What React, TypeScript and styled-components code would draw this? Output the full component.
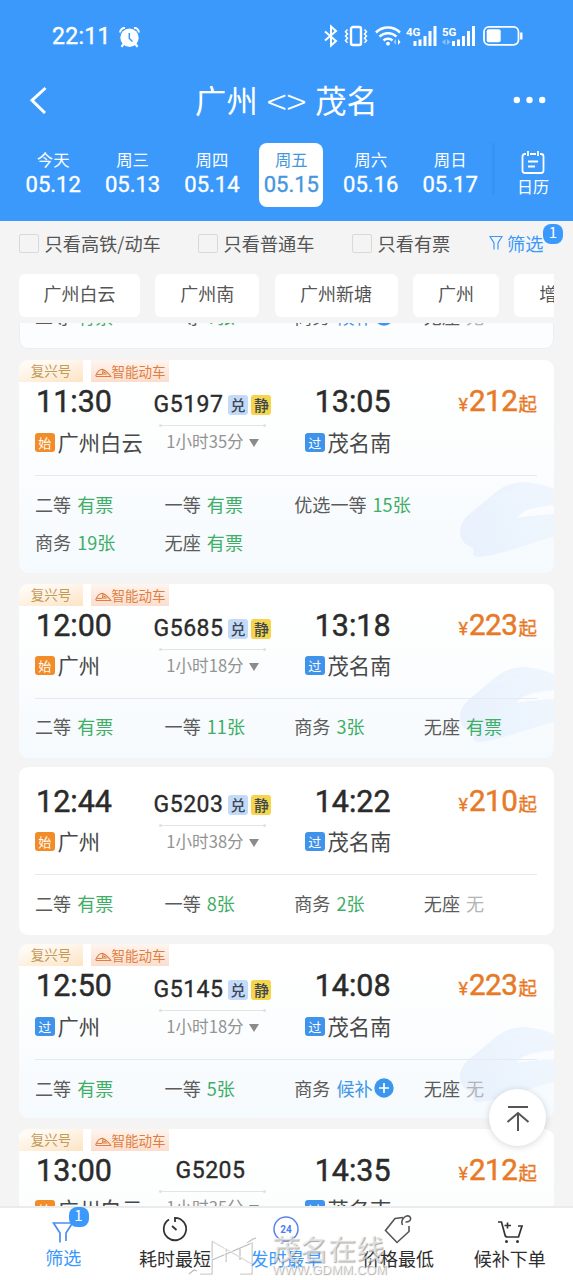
import React from 'react';
import styled, { createGlobalStyle } from 'styled-components';

const BLUE = '#3b99fc';
const GREEN = '#3fae66';
const ORANGE = '#e87a27';
const NUM = `Roboto, "Noto Sans CJK SC", sans-serif`;

const GlobalStyle = createGlobalStyle`
  * { box-sizing: border-box; }
  body { margin: 0; font-family: "Noto Sans CJK SC", sans-serif; background: #f4f4f4; }
`;

const Screen = styled.div`
  position: relative;
  width: 573px;
  height: 1280px;
  display: flex;
  flex-direction: column;
  overflow: hidden;
  background: #f4f4f4;
  white-space: nowrap;
`;

const Header = styled.header`
  flex: none;
  height: 221px;
  background: ${BLUE};
  color: #fff;
  display: flex;
  flex-direction: column;
`;

const StatusBar = styled.div`
  height: 72px;
  padding: 0 50px 0 52px;
  display: flex;
  align-items: center;
  justify-content: space-between;
`;

const StatusClock = styled.div`
  display: flex;
  align-items: center;
  gap: 8px;
  padding-top: 2px;
  font: 450 23px/30px ${NUM};
  letter-spacing: 0.3px;
  -webkit-text-stroke: 0.4px;
`;

const TitleRow = styled.div`
  height: 56px;
  padding: 0 28px;
  display: grid;
  grid-template-columns: 36px 1fr 36px;
  align-items: center;
`;

const Title = styled.h1`
  margin: 0;
  display: flex;
  justify-content: center;
  gap: 9px;
  font-size: 31.3px;
  line-height: 40px;
  font-weight: 400;
`;

const Arrows = styled.span`
  font-size: 37px;
  font-weight: 300;
`;

const Dots = styled.svg`
  overflow: visible;
`;

const DateRow = styled.div`
  margin-top: 15px;
  height: 64px;
  padding-left: 21.2px;
  display: flex;
  gap: 15.4px;
`;

const DateTab = styled.div<{ $active?: boolean }>`
  width: 64px;
  height: 64px;
  flex: none;
  border-radius: 8px;
  display: flex;
  flex-direction: column;
  align-items: center;
  padding-top: 5px;
  background: ${p => (p.$active ? '#fff' : 'transparent')};
  color: ${p => (p.$active ? '#4596dd' : '#fff')};
`;

const Weekday = styled.span`
  font-size: 16.4px;
  line-height: 22px;
`;

const DayNumber = styled.span`
  margin-top: 1px;
  font: 450 22px/28px ${NUM};
  -webkit-text-stroke: 0.35px;
`;

const Calendar = styled.div`
  width: 80px;
  display: flex;
  flex-direction: column;
  align-items: center;
  padding-top: 7px;
  border-left: 3px solid rgba(30, 120, 225, 0.16);
  margin-left: -6px;
  height: 52px;
  svg { flex: none; }
`;

const CalendarLabel = styled.span`
  font-size: 16px;
  line-height: 22px;
`;

const Filters = styled.div`
  flex: none;
  height: 53px;
  padding: 0 0 9px 19px;
  display: flex;
  align-items: center;
  font-size: 18.2px;
  color: #555;
`;

const Check = styled.label<{ $w: number }>`
  width: ${p => p.$w}px;
  display: flex;
  align-items: center;
  gap: 6px;
  line-height: 25px;
`;

const Box = styled.i`
  width: 19.5px;
  height: 19.5px;
  border: 1.5px solid #d9d9d9;
  border-radius: 2px;
  margin-top: 1px;
`;

const FilterButton = styled.div`
  position: relative;
  display: flex;
  align-items: center;
  gap: 4px;
  line-height: 26px;
  color: ${BLUE};
`;

const Badge = styled.span<{ $x: number; $y: number }>`
  position: absolute;
  left: ${p => p.$x}px;
  top: ${p => p.$y}px;
  width: 20px;
  height: 19.5px;
  border-radius: 8px;
  background: ${BLUE};
  color: #fff;
  text-align: center;
  font: 400 15px/16px "Noto Sans CJK SC", sans-serif;
`;

const Chips = styled.div`
  flex: none;
  margin: 0 19px;
  height: 49px;
  display: flex;
  gap: 15.3px;
  overflow: hidden;
`;

const Chip = styled.div<{ $w: number }>`
  flex: none;
  width: ${p => p.$w}px;
  height: 43px;
  border-radius: 6px;
  background: #fff;
  color: #555;
  text-align: center;
  font-size: 18px;
  line-height: 39px;
`;

const List = styled.main`
  flex: 1;
  min-height: 0;
  padding: 0 19px;
  overflow: hidden;
`;

const Card = styled.section<{ $h: number; $mt: number; $tinted: boolean }>`
  position: relative;
  height: ${p => p.$h}px;
  margin-top: ${p => p.$mt}px;
  border-radius: 9px;
  overflow: hidden;
  background: ${p => (p.$tinted ? 'linear-gradient(180deg, #fff 0%, #fdfefe 35%, #f5fafe 100%)' : '#fff')};
`;

const ClippedCard = styled.section`
  height: 26px;
  border-radius: 0 0 9px 9px;
  overflow: hidden;
  background: #fcfdff;
  border: 1px solid #eceef2;
  border-top: 0;
`;

const ClippedSeats = styled.div`
  margin: -20px 0 0 -1px;
`;

const Tags = styled.div`
  height: 22px;
  display: flex;
  gap: 8px;
  font-size: 13.5px;
  line-height: 20px;
`;

const SeriesTag = styled.span`
  width: 64px;
  text-align: center;
  color: #c29a5a;
  background: linear-gradient(165deg, #fffaf4 20%, #fde4c4);
`;

const SmartTag = styled.span`
  width: 78px;
  display: flex;
  align-items: center;
  justify-content: center;
  gap: 0;
  color: #dd7f43;
  background: linear-gradient(180deg, #fef5f0, #fcddcc);
  svg { margin-top: 4px; }
`;

const Trip = styled.div<{ $h: number; $pad: number }>`
  position: relative;
  height: ${p => p.$h}px;
  padding-top: ${p => p.$pad}px;
  margin: 0 17px 0 16px;
  border-bottom: 1px solid #e6eaee;
  display: grid;
  grid-template-columns: 115px 125px 121px 1fr;
`;

const Stop = styled.div<{ $pl?: number }>`
  padding-left: ${p => p.$pl ?? 0}px;
`;

const Time = styled.div<{ $indent: number }>`
  padding-left: ${p => p.$indent}px;
  font: 450 30.5px/31px ${NUM};
  -webkit-text-stroke: 0.45px;
  color: #2b2b2b;
`;

const Station = styled.div<{ $gap: number }>`
  margin-top: ${p => p.$gap}px;
  height: 23px;
  display: flex;
  align-items: center;
  gap: 3px;
  font-size: 21.3px;
  line-height: 23px;
  color: #484848;
`;

const StationName = styled.span`
  margin-top: -2px;
`;

const Mark = styled.i<{ $bg: string }>`
  width: 19.5px;
  height: 19.5px;
  border-radius: 3px;
  background: ${p => p.$bg};
  color: #fff;
  text-align: center;
  font-style: normal;
  font-size: 13px;
  line-height: 19px;
`;

const Middle = styled.div<{ $pt: number }>`
  padding-top: ${p => p.$pt}px;
  display: flex;
  flex-direction: column;
  align-items: center;
`;

const TrainNo = styled.div<{ $plain: boolean }>`
  display: flex;
  align-items: center;
  gap: 3.5px;
  height: 26px;
  margin-right: ${p => (p.$plain ? 4 : 0)}px;
  font: 450 23px/26px ${NUM};
  letter-spacing: 0.5px;
  -webkit-text-stroke: 0.35px;
  color: #2b2b2b;
`;

const Feature = styled.i<{ $bg: string; $first?: boolean }>`
  width: 20px;
  height: 20px;
  margin-left: ${p => (p.$first ? 1 : 0)}px;
  border-radius: 3px;
  background: ${p => p.$bg};
  color: #3f4654;
  text-align: center;
  letter-spacing: 0;
  -webkit-text-stroke: 0;
  font: 500 15px/19px "Noto Sans CJK SC", sans-serif;
`;

const Track = styled.div`
  width: 107px;
  height: 3px;
  margin-top: 6px;
  display: flex;
  align-items: center;
  justify-content: space-between;
  background: linear-gradient(#e2e4e6, #e2e4e6) center / 100% 1px no-repeat;
  &::before, &::after {
    content: '';
    width: 3px;
    height: 3px;
    border-radius: 50%;
    background: #dfe2e5;
  }
`;

const Duration = styled.div`
  display: flex;
  align-items: center;
  gap: 5px;
  margin-top: 2px;
  font-size: 16.6px;
  line-height: 24px;
  color: #939393;
`;

const Caret = styled.i`
  margin-top: 3px;
  border: 5.8px solid transparent;
  border-top: 8px solid #8b8b8b;
  border-bottom: 0;
`;

const Price = styled.div`
  text-align: right;
  font: 450 18px/31px ${NUM};
  -webkit-text-stroke: 0.3px;
  color: ${ORANGE};
`;

const Amount = styled.span`
  font-size: 29.5px;
  letter-spacing: -0.4px;
  margin: 0 1px;
  -webkit-text-stroke: 0.5px;
`;

const PriceFrom = styled.span`
  font: 400 18.5px/30px "Noto Sans CJK SC", sans-serif;
`;

const Seats = styled.div<{ $pt: number }>`
  position: relative;
  padding: ${p => p.$pt}px 0 0 16px;
  display: grid;
  grid-template-columns: repeat(4, 129.6px);
  row-gap: 12.4px;
  font-size: 18.1px;
  line-height: 26px;
  color: #5b5b5b;
`;

const Seat = styled.div<{ $wide: boolean }>`
  display: flex;
  align-items: center;
  gap: 6px;
  grid-column: span ${p => (p.$wide ? 2 : 1)};
`;

const SeatState = styled.span<{ $color: string }>`
  display: flex;
  align-items: center;
  gap: 1px;
  color: ${p => p.$color};
`;

const TrainArt = styled.svg`
  position: absolute;
  right: 0;
  bottom: 15px;
`;

const TopButton = styled.button`
  position: absolute;
  left: 489px;
  top: 1089px;
  width: 57px;
  height: 57px;
  padding: 0;
  border: 0;
  border-radius: 50%;
  background: #fff;
  box-shadow: 0 1px 7px rgba(0, 0, 0, 0.16);
  display: flex;
  align-items: center;
  justify-content: center;
`;

const TabBar = styled.nav`
  flex: none;
  height: 74px;
  padding: 0 7.5px;
  border-top: 2px solid #ebebeb;
  background: #fff;
  display: flex;
`;

const Tab = styled.div<{ $blue?: boolean; $lift?: boolean }>`
  position: relative;
  flex: 1;
  display: flex;
  flex-direction: column;
  align-items: center;
  padding-top: 7px;
  font-size: 18px;
  line-height: 26px;
  color: ${p => (p.$blue ? BLUE : '#2d2d2d')};
  svg { height: 30px; flex: none; margin-bottom: ${p => (p.$lift ? -1.5 : 0)}px; }
`;

const Watermark = styled.div`
  position: absolute;
  left: 186px;
  top: 1234px;
  display: flex;
  gap: 4px;
  pointer-events: none;
  color: rgba(255, 255, 255, 0.6);
  text-shadow: 1px 1px 1px rgba(110, 110, 110, 0.6);
`;

const WatermarkText = styled.div`
  display: flex;
  flex-direction: column;
  padding-left: 12px;
`;

const WatermarkName = styled.span`
  font-weight: 500;
  font-size: 28px;
  line-height: 29px;
`;

const WatermarkUrl = styled.span`
  font: 400 13px/14px "Liberation Sans", sans-serif;
`;

function StatusIcons() {
  return (
    <svg width="200" height="24" viewBox="0 0 200 24" fill="none" stroke="#fff" strokeWidth="2">
      <path d="M2 7.5 13 17 8 21.5V2.5L13 7 2 16.5" />
      <rect x="28" y="3" width="10" height="18" rx="2" strokeWidth="2.4" />
      <path d="M24.5 5.5l-2 2.2 2 2.2-2 2.2 2 2.2-2 2.2 2 2.2M41.500 5.500l2 2.200-2 2.200 2 2.200-2 2.200 2 2.200-2 2.200" strokeWidth="1.5" />
      <path d="M53 8.500a17 17 0 0 1 24 0M56.500 12.700a12 12 0 0 1 17 0M60.500 16.500a6.500 6.500 0 0 1 9 0" strokeWidth="2.500" />
      <circle cx="65" cy="19.700" r="1.900" fill="#fff" stroke="none" />
      <path d="M75 15v6l2.500-3z" fill="#fff" stroke="none" />
      <path d="M73 15v6l-2.500-3z" fill="#9ccdff" stroke="none" />
      <g fill="#fff" stroke="none">
        <path d="M90.500 17h3v5h-3zM95.500 15.500h3V22h-3zM100.500 12h3v10h-3zM105.500 7h3v15h-3zM110.500 2h3v20h-3z" />
        <path d="M129 17h3v5h-3zM134 15.500h3V22h-3zM139 12h3v10h-3zM144 7h3v15h-3zM149 2h3v20h-3z" />
        <path d="M122.500 15v6l-3.500-3zM124 15v6l3.500-3z" fill="#8cc3fd" />
        <text x="83" y="11.500" fontFamily="Roboto" fontWeight="700" fontSize="11.500">4G</text>
        <text x="119" y="11.500" fontFamily="Roboto" fontWeight="700" fontSize="11.500">5G</text>
      </g>
      <rect x="161" y="2.800" width="34.500" height="18" rx="5" strokeWidth="1.800" />
      <rect x="163.700" y="5.300" width="14" height="13" rx="2" fill="#fff" stroke="none" />
      <path d="M198.300 8.500v7" strokeWidth="2.400" />
    </svg>
  );
}

function AlarmIcon() {
  return (
    <svg width="21" height="21" viewBox="0 0 21 21">
      <circle cx="10.500" cy="10.800" r="9.200" fill="#fff" />
      <path d="M1.200 5.500A4 4 0 0 1 6 1.200M19.800 5.500A4 4 0 0 0 15 1.200" stroke="#fff" strokeWidth="2" fill="none" />
      <path d="M4.500 17 2.500 19.800M16.500 17l2 2.800" stroke="#fff" strokeWidth="2.200" />
      <path d="M10.300 6v5.500l3.200 3" stroke={BLUE} strokeWidth="1.500" fill="none" />
    </svg>
  );
}

function TrainIcon() {
  return (
    <svg width="17" height="10" viewBox="0 0 17 10" fill="none" stroke="#dd7f43" strokeWidth="1.100">
      <path d="M1 7C2 4.500 4.500 1.500 7.500 1.200 10.500 2.500 13.500 5 15.800 8.500H1.500Q.5 8 1 7zM2 6c2 .8 4 .6 5.500 0L8 1.500M7.500 6h5" />
      <path d="M8.500 3.300v2h3.500z" fill="#dd7f43" stroke="none" />
    </svg>
  );
}

function Waitlist() {
  return (
    <svg width="20" height="20" viewBox="0 0 20 20">
      <circle cx="10" cy="10" r="9.700" fill="#3b96ee" />
      <path d="M10 5v10M5 10h10" stroke="#fff" strokeWidth="1.700" />
    </svg>
  );
}

function TrainPicture() {
  return (
    <TrainArt width="94" height="78" viewBox="0 0 94 78">
      <defs>
        <linearGradient id="hull" x1="0" x2="1">
          <stop offset="0" stopColor="#e2edfc" />
          <stop offset="1" stopColor="#eaf3fd" />
        </linearGradient>
      </defs>
      <path d="M0 52C0 44 4 38 12 32L36 12C50 0 70-1 94 9V57C68 63 43 75 19 77 10 76 15 71 13 68 5 65 0 60 0 52z" fill="url(#hull)" opacity=".7" />
      <path d="M57 38C62 30 73 27 94 25V34C77 35 68 36 57 38z" fill="#fafcff" />
      <path d="M30 20C46 10 70 16 94 19" stroke="#f0f6fe" strokeWidth="1" fill="none" />
    </TrainArt>
  );
}

type SeatInfo = [string, string];
type TrainInfo = {
  no: string; dep: string; arr: string; from: string; start: boolean; duration: string; price: string;
  seats: SeatInfo[]; smart: boolean; perks: boolean;
  height: number; gap: number; top: number; stationGap: number; trainPad: number; seatPad: number;
};

const trains: TrainInfo[] = [
  { no: 'G5197', dep: '11:30', arr: '13:05', from: '广州白云', start: true, duration: '1小时35分', price: '212',
    seats: [['二等', '有票'], ['一等', '有票'], ['优选一等', '15张'], ['商务', '19张'], ['无座', '有票']],
    smart: true, perks: true, height: 213, gap: 11, top: 94, stationGap: 14, trainPad: 10, seatPad: 14.6 },
  { no: 'G5685', dep: '12:00', arr: '13:18', from: '广州', start: true, duration: '1小时18分', price: '223',
    seats: [['二等', '有票'], ['一等', '11张'], ['商务', '3张'], ['无座', '有票']],
    smart: true, perks: true, height: 173.5, gap: 11, top: 93, stationGap: 13, trainPad: 10, seatPad: 14 },
  { no: 'G5203', dep: '12:44', arr: '14:22', from: '广州', start: true, duration: '1小时38分', price: '210',
    seats: [['二等', '有票'], ['一等', '8张'], ['商务', '2张'], ['无座', '无']],
    smart: false, perks: true, height: 167.5, gap: 9.5, top: 108, stationGap: 13, trainPad: 27, seatPad: 14.5 },
  { no: 'G5145', dep: '12:50', arr: '14:08', from: '广州', start: false, duration: '1小时18分', price: '223',
    seats: [['二等', '有票'], ['一等', '5张'], ['商务', '候补'], ['无座', '无']],
    smart: true, perks: true, height: 174, gap: 9.5, top: 94, stationGap: 14, trainPad: 11, seatPad: 14.6 },
  { no: 'G5205', dep: '13:00', arr: '14:35', from: '广州白云', start: true, duration: '1小时35分', price: '212',
    seats: [], smart: true, perks: false, height: 174, gap: 11, top: 94, stationGap: 12, trainPad: 7, seatPad: 14 },
];

function SeatCell({ seat: [name, state] }: { seat: SeatInfo }) {
  const color = state === '无' ? '#b4b4b4' : state === '候补' ? '#4197e8' : GREEN;
  return (
    <Seat $wide={name.length > 2}>
      {name}
      <SeatState $color={color}>{state}{state === '候补' && <Waitlist />}</SeatState>
    </Seat>
  );
}

function TrainCard({ t }: { t: TrainInfo }) {
  return (
    <Card $h={t.height} $mt={t.gap} $tinted={t.smart}>
      {t.smart && t.seats.length > 0 && <TrainPicture />}
      {t.smart && (
        <Tags>
          <SeriesTag>复兴号</SeriesTag>
          <SmartTag><TrainIcon />智能动车</SmartTag>
        </Tags>
      )}
      <Trip $h={t.top} $pad={t.smart ? 4 : 19}>
        <Stop>
          <Time $indent={1}>{t.dep}</Time>
          <Station $gap={t.stationGap}>
            <Mark $bg={t.start ? '#f28c28' : '#3f93ea'}>{t.start ? '始' : '过'}</Mark>
            <StationName>{t.from}</StationName>
          </Station>
        </Stop>
        <Middle $pt={t.smart ? t.trainPad - 4 : t.trainPad - 21}>
          <TrainNo $plain={!t.perks}>
            {t.no}
            {t.perks && <><Feature $first $bg="#c3daf8">兑</Feature><Feature $bg="#f5d54a">静</Feature></>}
          </TrainNo>
          <Track />
          <Duration>{t.duration}<Caret /></Duration>
        </Middle>
        <Stop $pl={30}>
          <Time $indent={9.7}>{t.arr}</Time>
          <Station $gap={t.stationGap}><Mark $bg="#3f93ea">过</Mark><StationName>茂名南</StationName></Station>
        </Stop>
        <Price>¥<Amount>{t.price}</Amount><PriceFrom>起</PriceFrom></Price>
      </Trip>
      <Seats $pt={t.seatPad}>
        {t.seats.map(s => <SeatCell key={s[0]} seat={s} />)}
      </Seats>
    </Card>
  );
}

const days = [['今天', '05.12'], ['周三', '05.13'], ['周四', '05.14'], ['周五', '05.15'], ['周六', '05.16'], ['周日', '05.17']];
const stations: [string, number][] = [['广州白云', 121], ['广州南', 104], ['广州新塘', 123], ['广州', 86], ['增城', 86]];

export default function App() {
  return (
    <Screen>
      <GlobalStyle />
      <Header>
        <StatusBar>
          <StatusClock>22:11<AlarmIcon /></StatusClock>
          <StatusIcons />
        </StatusBar>
        <TitleRow>
          <svg width="20" height="28" viewBox="0 0 20 28" fill="none" stroke="#fff" strokeWidth="3"><path d="M17.500 2 4 14.300 17 27" /></svg>
          <Title><span>广州</span><Arrows>&lt;&gt;</Arrows><span>茂名</span></Title>
          <Dots width="36" height="8" viewBox="0 0 36 8" fill="#fff"><circle cx="7.800" cy="4" r="3.200" /><circle cx="20.500" cy="4" r="3.200" /><circle cx="33.200" cy="4" r="3.200" /></Dots>
        </TitleRow>
        <DateRow>
          {days.map(([w, d]) => (
            <DateTab key={d} $active={d === '05.15'}><Weekday>{w}</Weekday><DayNumber>{d}</DayNumber></DateTab>
          ))}
          <Calendar>
            <svg width="24" height="25" viewBox="0 0 24 25" fill="none" stroke="#fff" strokeWidth="1.800">
              <path d="M5 4H4a2.500 2.500 0 0 0-2.500 2.500v14A2.500 2.500 0 0 0 4 23h16a2.500 2.500 0 0 0 2.500-2.500v-14A2.500 2.500 0 0 0 20 4h-1M9 4h6M7 1v5M17 1v5M7 11.500h10M7 16.500h7" />
            </svg>
            <CalendarLabel>日历</CalendarLabel>
          </Calendar>
        </DateRow>
      </Header>
      <Filters>
        <Check $w={179}><Box />只看高铁/动车</Check>
        <Check $w={154}><Box />只看普通车</Check>
        <Check $w={137}><Box />只看有票</Check>
        <FilterButton>
          <svg width="14" height="16" viewBox="0 0 14 16" fill="none" stroke={BLUE} strokeWidth="1.200"><path d="M5 14.500V8L1 1.500h12L9 8v6.500" /></svg>
          筛选
          <Badge $x={54} $y={-6}>1</Badge>
        </FilterButton>
      </Filters>
      <Chips>
        {stations.map(([s, w]) => <Chip key={s} $w={w}>{s}</Chip>)}
      </Chips>
      <List>
        <ClippedCard>
          <ClippedSeats>
            <Seats $pt={0}>
              <SeatCell seat={['二等', '有票']} />
              <SeatCell seat={['一等', '7张']} />
              <SeatCell seat={['商务', '候补']} />
              <SeatCell seat={['无座', '无']} />
            </Seats>
          </ClippedSeats>
        </ClippedCard>
        {trains.map(t => <TrainCard key={t.no} t={t} />)}
      </List>
      <TabBar>
        <Tab $blue $lift>
          <svg width="24" viewBox="0 0 24 30" fill="none" stroke="#4d8df0" strokeWidth="1.700"><path d="M9 27.500V18L2.500 8h19L15 18v8" /></svg>
          筛选
          <Badge $x={61} $y={-1}>1</Badge>
        </Tab>
        <Tab>
          <svg width="28" viewBox="0 0 28 30" fill="none" stroke="#333" strokeWidth="1.800"><path d="M8 4.500A11.200 11.200 0 1 0 14 2.800V7M11 11l4.500 4" /></svg>
          耗时最短
        </Tab>
        <Tab $blue>
          <svg width="28" viewBox="0 0 28 30" fill="none" stroke="#5b82ee" strokeWidth="1.500"><circle cx="14" cy="14" r="12" /><text x="14" y="17.800" fontFamily="Roboto" fontWeight="700" fontSize="10" fill="#4d7ff0" stroke="none" textAnchor="middle">24</text></svg>
          发时最早
        </Tab>
        <Tab>
          <svg width="32" viewBox="0 0 32 30" fill="none" stroke="#555" strokeWidth="1.600"><path d="M21 2.500 13 3.500 3.500 15.500 15 27.500 27 16.500V11M20.500 10C18.500 6 21.500 2 24.500 1c4-1 5 3 3 5-1 1-3 1-4 1" /></svg>
          价格最低
        </Tab>
        <Tab>
          <svg width="28" viewBox="0 0 28 30" fill="none" stroke="#333" strokeWidth="1.700"><path d="M2 7h3.500l3.500 13q.4 2 2.500 2h11L26 11h-4M11.500 7.500v6M8.500 10.500h6.500" /><circle cx="10.500" cy="26.500" r="1.500" fill="#333" stroke="none" /><circle cx="21.500" cy="26.500" r="1.500" fill="#333" stroke="none" /></svg>
          候补下单
        </Tab>
      </TabBar>
      <TopButton aria-label="回到顶部">
        <svg width="24" height="28" viewBox="0 0 24 28" fill="none" stroke="#555" strokeWidth="2"><path d="M2 3h20M12 27V9M1.500 18 12 9 22.500 18" /></svg>
      </TopButton>
      <Watermark>
        <svg width="70" height="42" viewBox="0 0 70 42" fill="none" strokeWidth="1.200">
          <path d="M14 40H26V7L66 30M26 26 66 9V40H54M40 14V28M54 15V26M3 40l5-4 3 1M61 9l6-4 7-2" stroke="#a4a4a4" opacity=".75" />
          <path d="M13 39H25V6L65 29M25 25 65 8V39H53M39 13V27" stroke="#fff" opacity=".7" />
        </svg>
        <WatermarkText>
          <WatermarkName>茂名在线</WatermarkName>
          <WatermarkUrl>WWW.GDMM.COM</WatermarkUrl>
        </WatermarkText>
      </Watermark>
    </Screen>
  );
}
